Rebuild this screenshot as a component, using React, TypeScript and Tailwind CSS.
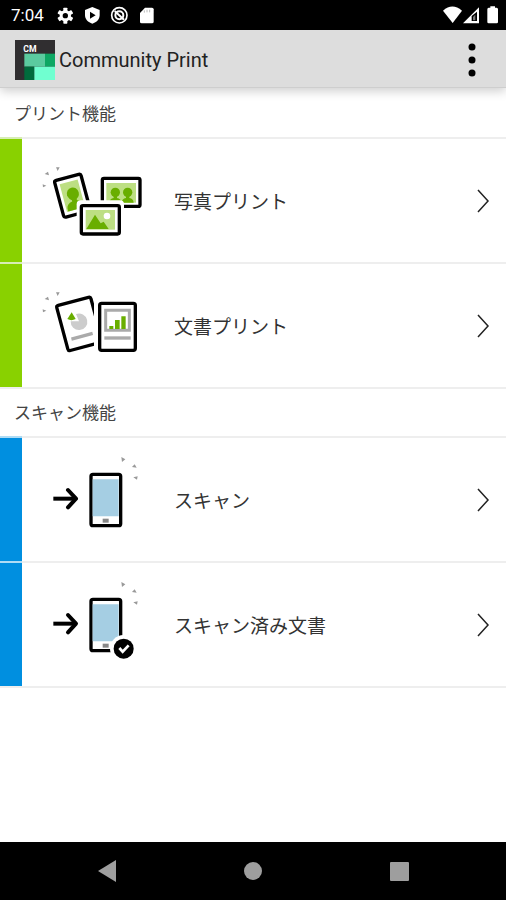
import React from "react";

function SystemIcons() {
  return (
    <svg className="h-[30px] w-[100px]" viewBox="171 0 300 90" fill="#fff" aria-hidden="true">
      <g transform="translate(199 47)">
        <circle r="17" />
        {[0, 60, 120].map((a) => (
          <rect key={a} x="-6" y="-24" width="12" height="48" rx="2" transform={`rotate(${a})`} />
        ))}
        <circle r="8" fill="#000" />
      </g>
      <path d="M280 21 302 30V45C302 58 293 67 280 71 267 67 258 58 258 45V30Z" />
      <path d="M273 35 290 46 273 56Z" fill="#000" />
      <circle cx="361" cy="46" r="23" fill="none" stroke="#fff" strokeWidth="5" />
      <circle cx="361" cy="46" r="12" fill="none" stroke="#fff" strokeWidth="6" />
      <path d="M347 33 375 59" stroke="#fff" strokeWidth="6" />
      <path d="M438 23H459Q464 23 464 28V65Q464 70 459 70H428Q423 70 423 65V39Z" />
      <path d="M436 31V38M444 29V37M452 29V37" stroke="#bbb" strokeWidth="3" />
    </svg>
  );
}

function SignalIcons() {
  return (
    <svg className="h-[30px] w-[66px]" viewBox="561 0 198 90" fill="#fff" aria-hidden="true">
      <path d="M570 32Q598 7 627 32L599 69Z" />
      <path d="M630 70 678 22V70Z" />
      <path d="M656 63V48L672 35V63Z" fill="#000" />
      <path d="M660 61V51L667 44V61Z" fill="#777" />
      <path d="M712 19H726V23H731Q735 23 735 28V66Q735 70 731 70H707Q703 70 703 66V28Q703 23 707 23H712Z" />
    </svg>
  );
}

function AppLogo() {
  return (
    <svg className="h-10 w-10" viewBox="0 0 120 120" role="img" aria-label="CM">
      <path d="M0 0H120V120H0Z" fill="#302e30" />
      <path d="M28 41H90V80H28Z" fill="#5bcb9f" />
      <path d="M90 41H120V80H90Z" fill="#0da763" />
      <path d="M28 80H58V120H28Z" fill="#006b3c" />
      <path d="M58 80H120V120H58Z" fill="#70ffd0" />
      <text x="25" y="36" fill="#fff" fontFamily="Roboto, sans-serif" fontSize="26" fontWeight="700">CM</text>
    </svg>
  );
}

function Art({ children }: { children: React.ReactNode }) {
  return (
    <svg className="h-[123px] w-[140px] shrink-0" viewBox="66 12 420 369" fill="none" aria-hidden="true">
      {children}
    </svg>
  );
}

function LeftSparks() {
  return (
    <path d="M168 97H179L173 108ZM134 117 144 110 147 121ZM128 148 139 152 129 157Z" fill="#999" />
  );
}

function PhotoArt() {
  return (
    <Art>
      <LeftSparks />
      <g transform="translate(217 182) rotate(-15)">
        <rect x="-41" y="-57" width="82" height="114" rx="6" fill="#fff" stroke="#000" strokeWidth="10" />
        <rect x="-28" y="-43" width="56" height="86" fill="#bddf83" />
        <ellipse cx="3" cy="-5" rx="18" ry="19" fill="#69ae00" />
        <path d="M-5 5H10V17Q25 20 25 33V43H-24V33Q-22 20 -5 17Z" fill="#69ae00" />
      </g>
      <rect x="307" y="130" width="113" height="84" rx="5" fill="#fff" stroke="#000" strokeWidth="10" />
      <path d="M319 144H408V203H319Z" fill="#bddf83" />
      {[346, 383].map((x) => (
        <g key={x} fill="#69ae00">
          <circle cx={x} cy="172" r="14" />
          <path d={`M${x - 5} 180h10v9q12 2 13 14h-36q1-12 13-14Z`} />
        </g>
      ))}
      <rect x="230" y="196" width="142" height="116" rx="12" fill="#fff" />
      <rect x="244" y="212" width="114" height="85" rx="5" fill="#fff" stroke="#000" strokeWidth="10" />
      <path d="M257 225H345V284H257Z" fill="#bddf83" />
      <path d="M259 282 285 239 302 265 311 260 326 282Z" fill="#69ae00" />
      <circle cx="321" cy="243" r="10" fill="#fff" />
    </Art>
  );
}

function DocumentArt() {
  return (
    <Art>
      <LeftSparks />
      <g transform="translate(237 191) rotate(-15)">
        <rect x="-52" y="-69" width="106" height="140" rx="6" fill="#fff" stroke="#000" strokeWidth="10" />
        <path d="M-34 39H32" stroke="#aaa" strokeWidth="10" />
      </g>
      <path d="M237 184 228 162A25 25 0 1 1 212 184Z" fill="#ccc" />
      <path d="M215 157 227 177Q214 184 202 177Z" fill="#69ae00" />
      <rect x="282" y="112" width="142" height="178" fill="#fff" />
      <rect x="299" y="130" width="107" height="141" rx="6" fill="#fff" stroke="#000" strokeWidth="10" />
      <path d="M317 151H388V211H317Z" stroke="#aaa" strokeWidth="9" />
      <path d="M328 198H340V207H328ZM345 180H359V207H345ZM364 169H377V207H364Z" fill="#69ae00" />
      <path d="M313 234H392" stroke="#aaa" strokeWidth="10" />
    </Art>
  );
}

function ScanArt({ done = false }: { done?: boolean }) {
  return (
    <Art>
      <path d="M364 69 376 76 366 84ZM396 99 404 91 410 101ZM400 130 413 127 411 137Z" fill="#999" />
      <path d="M160 194H224" stroke="#000" strokeWidth="12" />
      <path d="M204 168 228 194 204 220" stroke="#000" strokeWidth="12" strokeLinecap="round" strokeLinejoin="round" />
      <rect x="273" y="121" width="89" height="154" rx="6" fill="#fff" stroke="#000" strokeWidth="10" />
      <path d="M278 136H356V247H278Z" fill="#a5cee3" />
      <path d="M308 254H326V266H308Z" fill="#888" />
      {done && (
        <>
          <circle cx="371" cy="269" r="41" fill="#fff" />
          <circle cx="371" cy="269" r="30" fill="#000" />
          <path d="M358 267 368 278 386 259" stroke="#fff" strokeWidth="8" />
        </>
      )}
    </Art>
  );
}

function Row({ label, color, children }: { label: string; color: "green" | "blue"; children: React.ReactNode }) {
  const bar = color === "green" ? "bg-[#89d100]" : "bg-[#008fe0]";
  const line = color === "green" ? "border-[#d7edb5]" : "border-[#afdcf5]";
  return (
    <li>
      <button type="button" className="flex w-full items-stretch text-left">
        <span className={`w-[22px] shrink-0 border-t-2 ${bar} ${line}`} />
        <span className="flex flex-1 items-center border-t-2 border-[#eeeeee] pr-4">
          {children}
          <span className="flex-1 pt-1 pl-3 text-[19px] leading-6 text-[#333]">{label}</span>
          <svg className="h-6 w-[14px]" viewBox="0 0 14 24" fill="none" aria-hidden="true">
            <path d="M2 1 12 12 2 23" stroke="#222" strokeWidth="1.5" />
          </svg>
        </span>
      </button>
    </li>
  );
}

export default function App() {
  return (
    <div className="flex min-h-screen flex-col bg-white font-[Roboto,'Noto_Sans_CJK_JP',sans-serif]">
      <div className="flex h-[30px] items-center justify-between bg-black pl-[11px] text-white">
        <div className="flex items-center gap-3">
          <span className="text-[17px] leading-5">7:04</span>
          <SystemIcons />
        </div>
        <SignalIcons />
      </div>
      <header className="z-10 flex h-[58px] items-center justify-between border-b border-[#cecece] bg-[#dddddd] pt-[2px] pr-5 pl-[15px] shadow-[0_3px_10px_rgba(0,0,0,0.2)]">
        <div className="flex items-center gap-1">
          <AppLogo />
          <h1 className="text-[20px] leading-6 text-[#222]">Community Print</h1>
        </div>
        <button type="button" aria-label="Menu" className="flex w-7 justify-center">
          <svg className="h-9 w-2" viewBox="0 0 8 36" aria-hidden="true">
            <circle cx="4" cy="5" r="3.5" />
            <circle cx="4" cy="18" r="3.5" />
            <circle cx="4" cy="31" r="3.5" />
          </svg>
        </button>
      </header>
      <main className="flex-1">
        <section>
          <h2 className="flex h-[49px] items-center px-[14px] pt-[2px] text-[17px] leading-6 text-[#444]">プリント機能</h2>
          <ul>
            <Row label="写真プリント" color="green"><PhotoArt /></Row>
            <Row label="文書プリント" color="green"><DocumentArt /></Row>
          </ul>
        </section>
        <section className="border-b-2 border-[#eeeeee]">
          <h2 className="flex h-[49px] items-center border-t-2 border-[#eeeeee] px-[14px] text-[17px] leading-6 text-[#444]">スキャン機能</h2>
          <ul>
            <Row label="スキャン" color="blue"><ScanArt /></Row>
            <Row label="スキャン済み文書" color="blue"><ScanArt done /></Row>
          </ul>
        </section>
      </main>
      <nav className="flex h-[58px] justify-center bg-black text-[#9e9e9e]">
        <button type="button" aria-label="Back" className="flex w-[146px] items-center justify-center">
          <svg className="h-[22px] w-[18px]" viewBox="0 0 18 22" fill="currentColor"><path d="M18 0V22L0 11Z" /></svg>
        </button>
        <button type="button" aria-label="Home" className="flex w-[146px] items-center justify-center">
          <span className="size-[18px] rounded-full bg-current" />
        </button>
        <button type="button" aria-label="Recent apps" className="flex w-[146px] items-center justify-center">
          <span className="size-[19px] rounded-[1px] bg-current" />
        </button>
      </nav>
    </div>
  );
}
